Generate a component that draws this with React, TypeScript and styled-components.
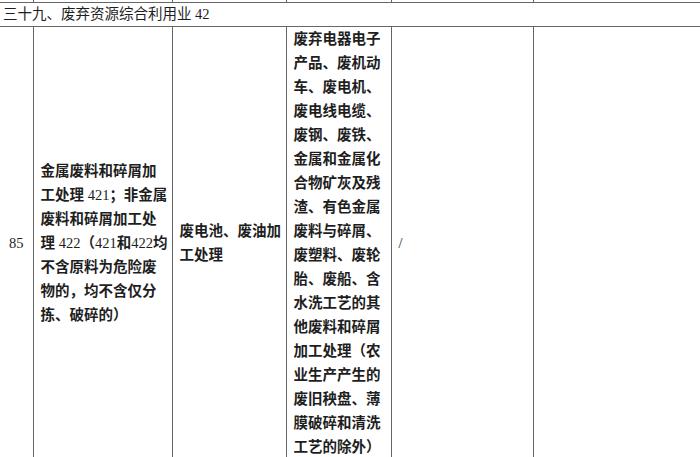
import React from 'react';
import styled, { createGlobalStyle } from 'styled-components';

const GlobalStyle = createGlobalStyle`
  html, body {
    margin: 0;
    padding: 0;
    background: #fff;
    overflow: hidden;
  }
`;

const materials = [
  '废弃电器电子',
  '产品、废机动',
  '车、废电机、',
  '废电线电缆、',
  '废钢、废铁、',
  '金属和金属化',
  '合物矿灰及残',
  '渣、有色金属',
  '废料与碎屑、',
  '废塑料、废轮',
  '胎、废船、含',
  '水洗工艺的其',
  '他废料和碎屑',
  '加工处理（农',
  '业生产产生的',
  '废旧秧盘、薄',
  '膜破碎和清洗',
  '工艺的除外）',
];

const Num = styled.span`
  font-weight: 400;
`;

const industry: React.ReactNode[] = [
  '金属废料和碎屑加',
  <>工处理 <Num>421</Num>；非金属</>,
  '废料和碎屑加工处',
  <>理 <Num>422</Num>（<Num>421</Num>和<Num>422</Num>均</>,
  '不含原料为危险废',
  '物的，均不含仅分',
  '拣、破碎的）',
];

const process = ['废电池、废油加', '工处理'];

const widths = [33, 139, 114, 105, 142, 187];

const App = () => {
  return (
    <>
      <GlobalStyle />
      <Table>
        <colgroup>
          {widths.map((w, i) => (
            <col key={i} style={{ width: w }} />
          ))}
        </colgroup>
        <tbody>
          <StubRow>
            {widths.map((_, i) => (
              <StubCell key={i} />
            ))}
          </StubRow>
          <tr>
            <SectionCell colSpan={6}>三十九、废弃资源综合利用业 42</SectionCell>
          </tr>
          <tr>
            <Cell $center>
              <Num>85</Num>
            </Cell>
            <Cell>
              {industry.map((l, i) => (
                <Line key={i}>{l}</Line>
              ))}
            </Cell>
            <Cell>
              {process.map((l, i) => (
                <Line key={i}>{l}</Line>
              ))}
            </Cell>
            <Cell>
              {materials.map((l, i) => (
                <Line key={i}>{l}</Line>
              ))}
            </Cell>
            <Cell>
              <Num>/</Num>
            </Cell>
            <Cell />
          </tr>
        </tbody>
      </Table>
    </>
  );
};

export default App;

const Table = styled.table`
  border-collapse: collapse;
  table-layout: fixed;
  width: 720px;
  font-family: "Liberation Serif", "Noto Sans CJK SC", serif;
  font-size: 14.5px;
  color: #1e1e1e;
`;

const StubRow = styled.tr`
  height: 2px;
`;

const StubCell = styled.td`
  padding: 0;
  height: 2px;
  line-height: 0;
  border-right: 1px solid #666;
  border-bottom: 1px solid #666;
`;

const SectionCell = styled.td`
  height: 23px;
  padding: 0 3px;
  line-height: 23px;
  font-weight: 400;
  border-bottom: 1px solid #666;
  white-space: nowrap;
`;

const Cell = styled.td<{ $center?: boolean }>`
  padding: 0 7px;
  vertical-align: middle;
  text-align: ${(p) => (p.$center ? 'center' : 'left')};
  line-height: 24px;
  font-weight: 700;
  border-right: 1px solid #666;
  border-bottom: 1px solid #666;
  white-space: nowrap;
`;

const Line = styled.div`
  white-space: nowrap;
`;
